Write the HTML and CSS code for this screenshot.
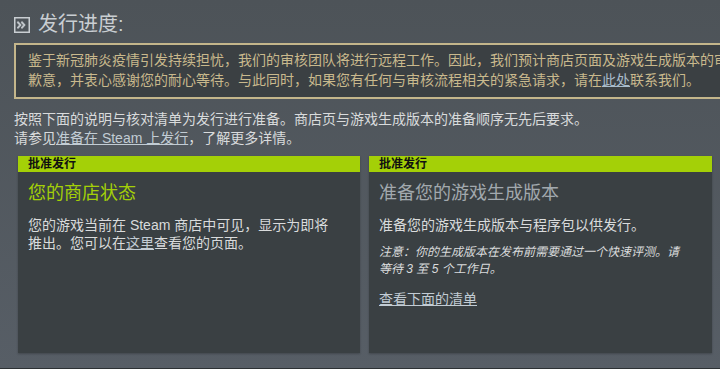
FILE: index.html
```html
<!DOCTYPE html>
<html lang="zh-CN">
<head>
  <meta charset="UTF-8">
  <meta name="viewport" content="width=device-width, initial-scale=1.0">
  <title>发行进度</title>
  <link rel="stylesheet" href="styles.css">
</head>
<body>
  <div class="page">
    <h2 class="page-title">
      <svg class="title-icon" width="16" height="16" viewBox="0 0 16 16">
        <rect x="0.75" y="0.75" width="14.5" height="14.5" fill="none" stroke="#c9ced2" stroke-width="1.5"/>
        <path d="M4 4.5 L7.2 8 L4 11.5 L3.4 10.2 L5.6 8 L3.4 5.8 Z M8 4.5 L11.2 8 L8 11.5 L7.4 10.2 L9.6 8 L7.4 5.8 Z" fill="#c9ced2" stroke="#c9ced2" stroke-width="0.9" stroke-linejoin="round"/>
      </svg>
      <span>发行进度:</span>
    </h2>

    <div class="notice">
      鉴于新冠肺炎疫情引发持续担忧，我们的审核团队将进行远程工作。因此，我们预计商店页面及游戏生成版本的审核时间会有所延长，对此我们深表<br>
      歉意，并衷心感谢您的耐心等待。与此同时，如果您有任何与审核流程相关的紧急请求，请在<a href="#">此处</a>联系我们。
    </div>

    <p class="intro">
      按照下面的说明与核对清单为发行进行准备。商店页与游戏生成版本的准备顺序无先后要求。<br>
      请参见<a href="#">准备在 Steam 上发行</a>，了解更多详情。
    </p>

    <div class="cards">
      <div class="card">
        <div class="card-head">批准发行</div>
        <div class="card-body">
          <h3 class="card-title done">您的商店状态</h3>
          <p class="card-text">您的游戏当前在 Steam 商店中可见，显示为即将推出。您可以在<a href="#">这里</a>查看您的页面。</p>
        </div>
      </div>
      <div class="card">
        <div class="card-head">批准发行</div>
        <div class="card-body">
          <h3 class="card-title">准备您的游戏生成版本</h3>
          <p class="card-text">准备您的游戏生成版本与程序包以供发行。</p>
          <p class="card-note">注意：你的生成版本在发布前需要通过一个快速评测。请等待 3 至 5 个工作日。</p>
          <p class="card-text"><a href="#">查看下面的清单</a></p>
        </div>
      </div>
    </div>
  </div>
</body>
</html>
```

FILE: styles.css
```css
:root {
  --page-bg: #545b63;
  --panel-bg: #3a4043;
  --text: #d9dbdc;
  --muted: #a2a9ae;
  --green: #a4d007;
  --tan: #c9b98d;
  --link: #c2ccd4;
}
html, body {
  overflow: hidden;
}
body {
  margin: 0;
  height: 369px;
  background: linear-gradient(#4d5358, #575e66);
  border-bottom: 1px solid #2c3134;
  box-sizing: border-box;
  font-family: "Liberation Sans", "Noto Sans CJK SC", sans-serif;
  color: var(--text);
}
.page {
  padding: 11px 8px 0 14px;
}
.page-title {
  display: flex;
  align-items: center;
  gap: 8px;
  margin: 0;
  font-size: 20px;
  font-weight: normal;
  line-height: 26px;
  color: #c9ced2;
}
.title-icon {
  flex: none;
  margin-top: 2px;
}
.notice {
  width: 940px;
  margin-top: 6px;
  padding: 6px 12px 7px;
  border: 2px solid #c4b68b;
  background-color: #3b4043;
  color: var(--tan);
  font-size: 14px;
  line-height: 19.5px;
  white-space: nowrap;
}
.notice a {
  color: #a9bccb;
  text-decoration: underline;
}
.intro {
  margin: 11px 0 0;
  font-size: 14px;
  line-height: 19px;
}
.intro a, .card-text a {
  color: var(--link);
  text-decoration: underline;
}
.cards {
  display: grid;
  grid-template-columns: 342px 343px;
  gap: 9px;
  margin: 8px 0 0 4px;
}
.card {
  background-color: var(--panel-bg);
  height: 197px;
  box-shadow: 0 1px 2px rgba(0, 0, 0, 0.25);
}
.card-head {
  height: 16px;
  padding-left: 10px;
  background-color: var(--green);
  color: #111;
  font-size: 12px;
  font-weight: bold;
  line-height: 16px;
}
.card-body {
  padding: 9px 30px 0 10px;
}
.card-title {
  margin: 0;
  font-size: 18px;
  font-weight: normal;
  line-height: 24px;
  color: var(--muted);
}
.card-title.done {
  color: var(--green);
}
.card-text {
  margin: 11px 0 0;
  font-size: 14px;
  line-height: 18px;
}
.card-note {
  margin: 10px 0 0;
  font-size: 12px;
  line-height: 17px;
  font-style: italic;
}
.card-note + .card-text {
  margin-top: 12px;
}
```
